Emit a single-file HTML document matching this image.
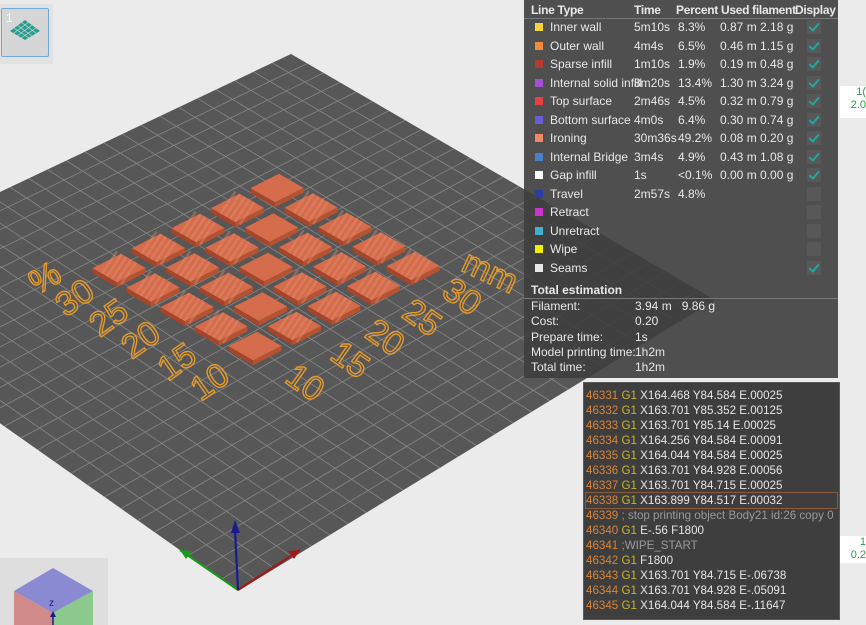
<!DOCTYPE html>
<html><head><meta charset="utf-8"><style>
body{margin:0;width:866px;height:625px;overflow:hidden;background:#ebebeb;font-family:"Liberation Sans",sans-serif;position:relative}
#scene{position:absolute;left:0;top:0}
.thumb{position:absolute;left:1px;top:8px;width:46px;height:47px;background:#d6d6d6;border:1px solid #6fa8dc;border-radius:2px}
.thumbwrap{position:absolute;left:0;top:4px;width:53px;height:60px;background:#e2e2e2}
.legend{position:absolute;left:524px;top:0;width:314px;height:378px;background:rgba(62,62,62,0.9);color:#e8e8e8;font-size:12px}
.legend .r{position:absolute;left:0;height:16px;line-height:16px;white-space:nowrap}
.legend span{position:absolute}
.hd span{letter-spacing:-0.3px}
.sw{width:8px;height:8px;top:4px;left:11px}
.cb{width:14px;height:14px;left:283px;top:1px;background:#585858}
.cb.on::after{content:"";position:absolute;left:4px;top:1px;width:4px;height:8px;border:solid #1fa9a0;border-width:0 2px 2px 0;transform:rotate(40deg)}
.gc{position:absolute;left:583px;top:382px;width:255px;height:236px;background:#3e3e3e;border:1px solid #5a5a5a;font-size:11.6px;color:#e6e6e6}
.gc div{position:absolute;left:2px;height:15px;line-height:15px;white-space:nowrap}
.n{color:#d9833a}.g{color:#c9b433}.c{color:#9a9a9a}
.side{position:absolute;left:840px;background:#fff;color:#2aa04a;font-size:11px;text-align:right;width:26px;line-height:13px}
</style></head><body>
<svg id="scene" width="866" height="625"></svg>
<div class="thumbwrap"></div>
<div class="thumb"><span style="position:absolute;left:4px;top:2px;color:#fff;font-size:12px">1</span>
<svg width="46" height="47"><polygon points="23,11 38,22 23,31 8,22" fill="#2a9d8f"/><g stroke="#d6d6d6" stroke-width="0.7"><line x1="15" y1="16" x2="30" y2="27"/><line x1="19" y1="13" x2="34" y2="24"/><line x1="12" y1="19" x2="27" y2="29"/><line x1="30" y1="16" x2="15" y2="27"/><line x1="27" y1="13" x2="12" y2="24"/><line x1="34" y1="19" x2="19" y2="29"/></g></svg></div>
<div style="position:absolute;left:0;top:558px;width:108px;height:67px;background:#dedede"></div>
<svg style="position:absolute;left:0;top:558px" width="108" height="67"><polygon points="53,10 93,33 53,55 14,33" fill="#8a8ad2"/><polygon points="14,33 53,55 53,67 14,67" fill="#d08a8a"/><polygon points="93,33 53,55 53,67 93,67" fill="#8cc98c"/><text x="49" y="48" font-size="10" fill="#1a1aa0" font-family="Liberation Sans">z</text><line x1="53" y1="56" x2="53" y2="67" stroke="#1a1a90" stroke-width="1.5"/><polygon points="50,59 56,59 53,53" fill="#1a1a90"/></svg>

<div class="legend">
<div style="position:absolute;left:0;top:18px;width:314px;height:1px;background:#777"></div>
<div class="r hd" style="top:2px;font-weight:bold"><span style="left:7px">Line Type</span><span style="left:110px">Time</span><span style="left:152px">Percent</span><span style="left:197px">Used filament</span><span style="left:271px">Display</span></div>
<div id="rows"></div>
<div class="r" style="top:282px;font-weight:bold"><span style="left:7px">Total estimation</span></div>
<div style="position:absolute;left:0;top:298px;width:314px;height:1px;background:#777"></div>
<div class="r" style="top:298px"><span style="left:7px">Filament:</span><span style="left:111px">3.94 m&nbsp;&nbsp;&nbsp;9.86 g</span></div>
<div class="r" style="top:313px"><span style="left:7px">Cost:</span><span style="left:111px">0.20</span></div>
<div class="r" style="top:329px"><span style="left:7px">Prepare time:</span><span style="left:111px">1s</span></div>
<div class="r" style="top:344px"><span style="left:7px">Model printing time:</span><span style="left:111px">1h2m</span></div>
<div class="r" style="top:359px"><span style="left:7px">Total time:</span><span style="left:111px">1h2m</span></div>
</div>

<div class="gc" id="gc"></div>
<div class="side" style="top:86px;height:32px">1(<br>2.0</div>
<div class="side" style="top:536px;height:27px">1<br>0.2</div>

<script>
var rows=[["#f5d33a","Inner wall","5m10s","8.3%","0.87 m 2.18 g",1],["#f08a3c","Outer wall","4m4s","6.5%","0.46 m 1.15 g",1],["#b23a30","Sparse infill","1m10s","1.9%","0.19 m 0.48 g",1],["#a050d0","Internal solid infill","8m20s","13.4%","1.30 m 3.24 g",1],["#e84040","Top surface","2m46s","4.5%","0.32 m 0.79 g",1],["#6a5cd8","Bottom surface","4m0s","6.4%","0.30 m 0.74 g",1],["#f08868","Ironing","30m36s","49.2%","0.08 m 0.20 g",1],["#4a80c8","Internal Bridge","3m4s","4.9%","0.43 m 1.08 g",1],["#ffffff","Gap infill","1s","<0.1%","0.00 m 0.00 g",1],["#2a3fa0","Travel","2m57s","4.8%","",0],["#d030d0","Retract","","","",0],["#40b0d0","Unretract","","","",0],["#f0f000","Wipe","","","",0],["#e8e8e8","Seams","","","",1]];
var h="";rows.forEach(function(r,i){var t=19+i*18.5;h+='<div class="r" style="top:'+t+'px;width:314px"><span class="sw" style="background:'+r[0]+'"></span><span style="left:26px">'+r[1]+'</span><span style="left:110px">'+r[2]+'</span><span style="left:154px">'+r[3]+'</span><span style="left:196px">'+r[4]+'</span><span class="cb'+(r[5]?' on':'')+'"></span></div>';});
document.getElementById("rows").innerHTML=h;
var g=[["46331","G1"," X164.468 Y84.584 E.00025"],["46332","G1"," X163.701 Y85.352 E.00125"],["46333","G1"," X163.701 Y85.14 E.00025"],["46334","G1"," X164.256 Y84.584 E.00091"],["46335","G1"," X164.044 Y84.584 E.00025"],["46336","G1"," X163.701 Y84.928 E.00056"],["46337","G1"," X163.701 Y84.715 E.00025"],["46338","G1"," X163.899 Y84.517 E.00032"],["46339","","; stop printing object Body21 id:26 copy 0"],["46340","G1"," E-.56 F1800"],["46341","",";WIPE_START"],["46342","G1"," F1800"],["46343","G1"," X163.701 Y84.715 E-.06738"],["46344","G1"," X163.701 Y84.928 E-.05091"],["46345","G1"," X164.044 Y84.584 E-.11647"]];
h="";g.forEach(function(l,i){var t=5+i*15;h+='<div style="top:'+t+'px;'+(i==7?'border:1px solid #8a5a3a;left:1px;width:251px;top:'+(t-1)+'px;':'')+'"><span class="n">'+l[0]+'</span> '+(l[1]?'<span class="g">'+l[1]+'</span>'+l[2]:'<span class="c">'+l[2]+'</span>')+'</div>';});
document.getElementById("gc").innerHTML=h;
var PT=[291,54],PR=[715,300],PB=[238,591],PL=[-196,285];
function bl(u,v){
 var x=PB[0]*(1-u)*(1-v)+PR[0]*u*(1-v)+PL[0]*(1-u)*v+PT[0]*u*v;
 var y=PB[1]*(1-u)*(1-v)+PR[1]*u*(1-v)+PL[1]*(1-u)*v+PT[1]*u*v;return [x,y];}
var s='<polygon points="'+PT+' '+PR+' '+PB+' '+PL+'" fill="#575757"/><g stroke="#8c8c8c" stroke-width="0.8" opacity="0.9">';
var N=26;for(var i=1;i<N;i++){var k=i/N;var p=bl(k,0),q=bl(k,1);s+='<line x1="'+p[0]+'" y1="'+p[1]+'" x2="'+q[0]+'" y2="'+q[1]+'"/>';p=bl(0,k);q=bl(1,k);s+='<line x1="'+p[0]+'" y1="'+p[1]+'" x2="'+q[0]+'" y2="'+q[1]+'"/>';}
s+='</g>';
var T0=[277,188],a=[34,19.5],b=[-39.5,20],K=0.36;
for(var j=0;j<5;j++)for(var i=0;i<5;i++){var c=[T0[0]+i*a[0]+j*b[0],T0[1]+i*a[1]+j*b[1]];
 var P=function(x,y){return [c[0]+x*a[0]+y*b[0],c[1]+x*a[1]+y*b[1]];};
 var t=P(-K,-K),r=P(K,-K),bo=P(K,K),le=P(-K,K);
 s+='<polygon points="'+le+' '+bo+' '+bo[0]+','+(bo[1]+5)+' '+le[0]+','+(le[1]+5)+'" fill="#a5452a"/>';
 s+='<polygon points="'+r+' '+bo+' '+bo[0]+','+(bo[1]+5)+' '+r[0]+','+(r[1]+5)+'" fill="#b55232"/>';
 s+='<polygon points="'+t+' '+r+' '+bo+' '+le+'" fill="#d56c4b"/>';
 if(i!=j){for(var m=-2;m<=2;m++){var f=m*0.14;var p1=P(f-0.2,-K),p2=P(f+0.2,K);s+='<line x1="'+p1[0]+'" y1="'+p1[1]+'" x2="'+p2[0]+'" y2="'+p2[1]+'" stroke="#e8977a" stroke-width="2.5" opacity="0.35"/>';}}
}
var lab=function(x,y,t,rot){return '<text x="'+x+'" y="'+y+'" text-anchor="middle" dominant-baseline="central" transform="rotate('+rot+' '+x+' '+y+')" font-size="34" fill="none" stroke="#e59a2c" stroke-width="1.4" font-family="Liberation Sans">'+t+'</text>';};
s+=lab(45,278,"%",-30)+lab(75,298,"30",-35)+lab(109,318,"25",-35)+lab(141,340,"20",-35)+lab(177,362,"15",-35)+lab(210,382,"10",-35);
s+=lab(490,272,"mm",25)+lab(462,297,"30",35)+lab(422,318,"25",35)+lab(385,338,"20",35)+lab(350,360,"15",35)+lab(305,383,"10",35);
s+='<g stroke-width="2.2"><line x1="238" y1="590" x2="180" y2="550" stroke="#1a9a1a"/><line x1="238" y1="590" x2="300" y2="550" stroke="#a01818"/><line x1="238" y1="590" x2="235" y2="530" stroke="#1a1a90"/></g>';
s+='<polygon points="180,550 192,551 186,559" fill="#1a9a1a"/><polygon points="300,550 288,551 294,559" fill="#a01818"/><polygon points="235,520 231,533 240,533" fill="#1a1a90"/>';
document.getElementById("scene").innerHTML=s;
</script>
</body></html>
